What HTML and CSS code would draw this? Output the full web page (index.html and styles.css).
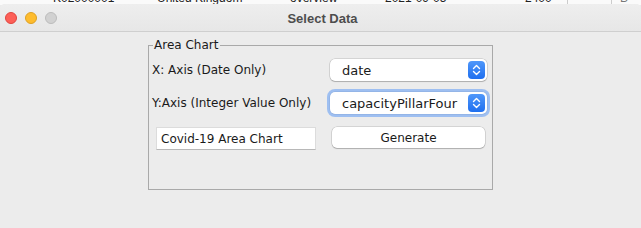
FILE: index.html
```html
<!DOCTYPE html>
<html lang="en">
<head>
    <meta charset="UTF-8">
    <title>Select Data</title>
    <link rel="stylesheet" href="styles.css">
</head>
<body>

    <!-- table window behind the dialog -->
    <div class="behind">
        <div class="behind-row">
            <span class="cell c1">K02000001</span>
            <span class="cell c2">United Kingdom</span>
            <span class="cell c3">overview</span>
            <span class="cell c4">2021-09-05</span>
            <span class="cell c5">2400</span>
            <span class="cell c6"></span>
            <span class="cell c7">B</span>
        </div>
    </div>

    <!-- dialog -->
    <div class="window">
        <div class="titlebar">
            <div class="lights">
                <span class="light red"></span>
                <span class="light yellow"></span>
                <span class="light grey"></span>
            </div>
            <div class="title">Select Data</div>
        </div>

        <div class="content">
            <fieldset class="group">
                <legend>Area Chart</legend>
                <div class="form-grid">
                    <label class="label">X: Axis (Date Only)</label>
                    <div class="popup">
                        <span>date</span>
                        <span class="stepper">
                            <svg width="9" height="12" viewBox="0 0 9 12"><path d="M1.5 4.5 L4.5 1.5 L7.5 4.5 M1.5 7.5 L4.5 10.5 L7.5 7.5" fill="none" stroke="#fff" stroke-width="1.4" stroke-linecap="round" stroke-linejoin="round"/></svg>
                        </span>
                    </div>

                    <label class="label">Y:Axis (Integer Value Only)</label>
                    <div class="popup focused">
                        <span>capacityPillarFour</span>
                        <span class="stepper">
                            <svg width="9" height="12" viewBox="0 0 9 12"><path d="M1.5 4.5 L4.5 1.5 L7.5 4.5 M1.5 7.5 L4.5 10.5 L7.5 7.5" fill="none" stroke="#fff" stroke-width="1.4" stroke-linecap="round" stroke-linejoin="round"/></svg>
                        </span>
                    </div>

                    <input class="text-field" type="text" value="Covid-19 Area Chart">
                    <button class="btn">Generate</button>
                </div>
            </fieldset>
        </div>
    </div>

</body>
</html>
```

FILE: styles.css
```css
* {
    margin: 0;
    padding: 0;
    box-sizing: border-box;
}

body {
    width: 641px;
    height: 228px;
    overflow: hidden;
    background-color: #ececec;
    font-family: "DejaVu Sans", Verdana, sans-serif;
    font-size: 12px;
    color: #1a1a1a;
}

/* window behind */
.behind {
    height: 5px;
    overflow: hidden;
    background-color: #fafafa;
}

.behind-row {
    display: flex;
    height: 14px;
    margin-top: -9px;
    font-family: "Liberation Sans", Arial, sans-serif;
    font-size: 12px;
    line-height: 14px;
    color: #222;
}

.cell {
    flex: none;
}

.c1 { width: 157px; padding-left: 53px; }
.c2 { width: 133px; }
.c3 { width: 95px; }
.c4 { width: 140px; }
.c5 { width: 42px; }
.c6 { width: 45px; border-right: 1px solid #ccc; border-left: 1px solid #ccc; }
.c7 { width: 29px; padding-left: 8px; color: #777; }

/* dialog */
.window {
    background-color: #ececec;
    border-radius: 5px 5px 0 0;
    height: 223px;
    margin-top: -1px;
}

.titlebar {
    position: relative;
    height: 28px;
    border-bottom: 1px solid #cfcfcf;
    background: linear-gradient(#eeeeee, #e7e7e7);
    border-radius: 5px 5px 0 0;
}

.lights {
    display: flex;
    gap: 8px;
    padding: 8px 0 0 5px;
}

.light {
    width: 12px;
    height: 12px;
    border-radius: 50%;
}

.red {
    background-color: #fd5f57;
    border: 1px solid #e0443e;
}

.yellow {
    background-color: #febc2e;
    border: 1px solid #dea123;
}

.grey {
    background-color: #d1d1d1;
    border: 1px solid #bcbcbc;
}

.title {
    position: absolute;
    top: 1px;
    left: 0;
    right: 0;
    line-height: 28px;
    text-align: center;
    font-family: "Liberation Sans", Arial, sans-serif;
    font-weight: bold;
    font-size: 13px;
    color: #4d4d4d;
    padding-left: 4px;
}

.content {
    padding: 5px 0 0 148px;
}

.group {
    width: 345px;
    height: 153px;
    border: 1px solid #a9a9a9;
    padding: 6px 0 0 3px;
}

.group legend {
    margin-left: 1px;
    padding: 0 2px 0 1px;
    font-size: 12px;
    line-height: 16px;
}

.form-grid {
    display: grid;
    grid-template-columns: 178px 157px;
    grid-template-rows: 22px 22px 23px;
    row-gap: 11px;
    align-items: center;
}

.label {
    white-space: nowrap;
}

.popup {
    display: flex;
    align-items: center;
    justify-content: space-between;
    height: 22px;
    padding: 0 2px 0 12px;
    background-color: #fff;
    border-radius: 5px;
    box-shadow: 0 0 0 0.5px rgba(0, 0, 0, 0.2), 0 1px 1px rgba(0, 0, 0, 0.18);
    font-size: 13px;
}

.popup.focused {
    box-shadow: 0 0 0 3px rgba(95, 155, 245, 0.55), 0 0 0 0.5px rgba(0, 0, 0, 0.2);
}

.stepper {
    display: flex;
    align-items: center;
    justify-content: center;
    width: 17px;
    height: 18px;
    border-radius: 4px;
    background: linear-gradient(#4f97fa, #1f6fef);
}

.text-field {
    align-self: start;
    width: 160px;
    height: 23px;
    margin: 2px 0 0 4px;
    padding-left: 4px;
    border: 1px solid #dcdcdc;
    border-bottom-color: #b8b8b8;
    background-color: #fff;
    font-family: "DejaVu Sans", Verdana, sans-serif;
    font-size: 12px;
    color: #1a1a1a;
    outline: none;
}

.btn {
    align-self: start;
    width: 153px;
    height: 21px;
    margin: 2px 0 0 2px;
    background-color: #fff;
    border: none;
    border-radius: 5px;
    box-shadow: 0 0 0 0.5px rgba(0, 0, 0, 0.2), 0 1px 1px rgba(0, 0, 0, 0.18);
    font-family: "DejaVu Sans", Verdana, sans-serif;
    font-size: 12px;
    color: #1a1a1a;
}
```
